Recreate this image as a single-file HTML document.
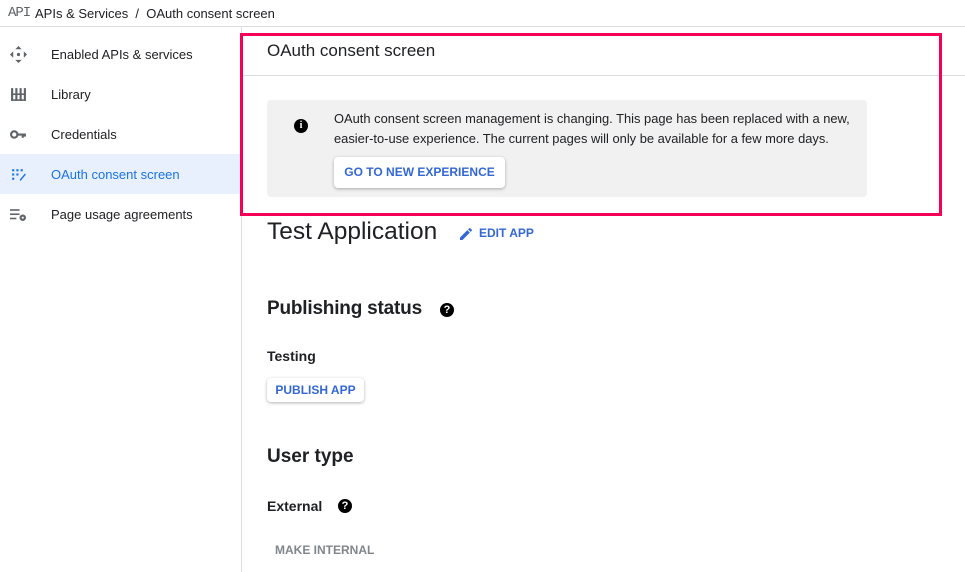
<!DOCTYPE html>
<html><head><meta charset="utf-8"><style>
*{margin:0;padding:0;box-sizing:border-box}
body{width:965px;height:572px;overflow:hidden;background:#fff;font-family:"Liberation Sans",Arial,sans-serif;color:#202124;position:relative}
.a{position:absolute;white-space:nowrap}
.top{position:absolute;left:0;top:0;width:965px;height:27px;border-bottom:1px solid #dadce0}
.side{position:absolute;left:0;top:27px;width:242px;height:545px;border-right:1px solid #dadce0}
.nav{position:absolute;left:0;width:241px;height:40px;font-size:13px;line-height:40px;padding-left:51px}
.nav.act{background:#e8f0fe;color:#1a73e8}
.ic{position:absolute;left:10px;top:12px;width:17px;height:17px}
.btn{position:absolute;background:#fff;border-radius:4px;box-shadow:0 1px 3px rgba(0,0,0,.3);color:#3367d6;font-weight:bold;font-size:12px;text-align:center}
.q{display:inline-block;width:14px;height:14px;border-radius:50%;background:#000;color:#fff;font-size:11px;font-weight:bold;text-align:center;line-height:14px}
</style></head><body>
<div class="top">
 <div class="a" style="left:8px;top:5px;font-family:'Liberation Mono',monospace;font-size:14px;color:#5f6368;letter-spacing:-1px">API</div>
 <div class="a" style="left:35px;top:6px;font-size:13px">APIs &amp; Services &nbsp;/&nbsp; OAuth consent screen</div>
</div>
<div class="side">
 <div class="nav" style="top:7px;line-height:42px"><svg class="ic" viewBox="0 0 16 16" fill="#5f6368"><path d="M8 0l3 3H5z"/><path d="M8 16l3-3H5z"/><path d="M0 8l3-3v6z"/><path d="M16 8l-3-3v6z"/><circle cx="8" cy="8" r="1.5"/></svg>Enabled APIs &amp; services</div>
 <div class="nav" style="top:47px;line-height:42px"><svg class="ic" viewBox="0 0 16 16" fill="#5f6368"><rect x="1" y="2" width="2" height="12"/><rect x="5" y="2" width="2" height="12"/><rect x="9" y="2" width="2" height="12"/><rect x="13" y="2" width="2" height="12"/><rect x="1" y="7" width="14" height="1.5"/><rect x="1" y="12.5" width="14" height="1.5"/></svg>Library</div>
 <div class="nav" style="top:87px;line-height:42px"><svg class="ic" viewBox="0 0 16 16" fill="none" stroke="#5f6368" stroke-width="2"><circle cx="4" cy="8" r="3"/><path d="M7 8h8M12 8v3M14 8v2"/></svg>Credentials</div>
 <div class="nav act" style="top:127px;line-height:42px"><svg class="ic" viewBox="0 0 16 16" fill="#1a73e8"><rect x="2" y="3" width="2" height="2"/><rect x="6" y="3" width="2" height="2"/><rect x="10" y="3" width="2" height="2"/><rect x="2" y="7" width="2" height="2"/><rect x="6" y="7" width="2" height="2"/><rect x="2" y="11" width="2" height="2"/><path d="M9 13l5-6 1 1-5 6z"/></svg>OAuth consent screen</div>
 <div class="nav" style="top:167px;line-height:42px"><svg class="ic" viewBox="0 0 16 16" fill="#5f6368"><rect x="0" y="3" width="9" height="1.5"/><rect x="0" y="7" width="9" height="1.5"/><rect x="0" y="11" width="6" height="1.5"/><circle cx="12" cy="11" r="3"/><circle cx="12" cy="11" r="1" fill="#fff"/></svg>Page usage agreements</div>
</div>
<div class="a" style="left:243px;top:75px;width:722px;height:1px;background:#dadce0"></div>
<div class="a" style="left:267px;top:41px;font-size:17px">OAuth consent screen</div>
<div class="a" style="left:267px;top:100px;width:600px;height:97px;background:#f1f1f1;border-radius:4px"></div>
<div class="a" style="left:294px;top:119px;width:14px;height:14px;border-radius:50%;background:#000;color:#fff;font-size:10px;font-weight:bold;text-align:center;line-height:14px;font-family:'Liberation Serif',serif">i</div>
<div class="a" style="left:334px;top:109px;font-size:12.9px;line-height:20px;color:#202124">OAuth consent screen management is changing. This page has been replaced with a new,<br>easier-to-use experience. The current pages will only be available for a few more days.</div>
<div class="btn" style="left:334px;top:157px;width:171px;height:31px;line-height:31px">GO TO NEW EXPERIENCE</div>
<div class="a" style="left:240px;top:33px;width:702px;height:183px;border:3px solid #f50057"></div>
<div class="a" style="left:267px;top:218px;font-size:24.5px">Test Application</div>
<svg class="a" style="left:458px;top:226px" width="16" height="16" viewBox="0 0 24 24" fill="#3367d6"><path d="M3 17.25V21h3.75L17.81 9.94l-3.75-3.75L3 17.25zM20.71 7.04a1 1 0 000-1.41l-2.34-2.34a1 1 0 00-1.41 0l-1.83 1.83 3.75 3.75 1.83-1.83z"/></svg>
<div class="a" style="left:479px;top:226px;font-size:12px;font-weight:bold;color:#3367d6">EDIT APP</div>
<div class="a" style="left:267px;top:298px;font-size:19px;font-weight:bold;letter-spacing:-0.2px">Publishing status</div>
<div class="a q" style="left:440px;top:303px">?</div>
<div class="a" style="left:267px;top:348px;font-size:14px;font-weight:bold">Testing</div>
<div class="btn" style="left:267px;top:378px;width:97px;height:24px;line-height:24px">PUBLISH APP</div>
<div class="a" style="left:267px;top:446px;font-size:19px;font-weight:bold">User type</div>
<div class="a" style="left:267px;top:498px;font-size:14px;font-weight:bold">External</div>
<div class="a q" style="left:338px;top:499px">?</div>
<div class="a" style="left:275px;top:543px;font-size:12px;font-weight:bold;color:#80868b">MAKE INTERNAL</div>
</body></html>
